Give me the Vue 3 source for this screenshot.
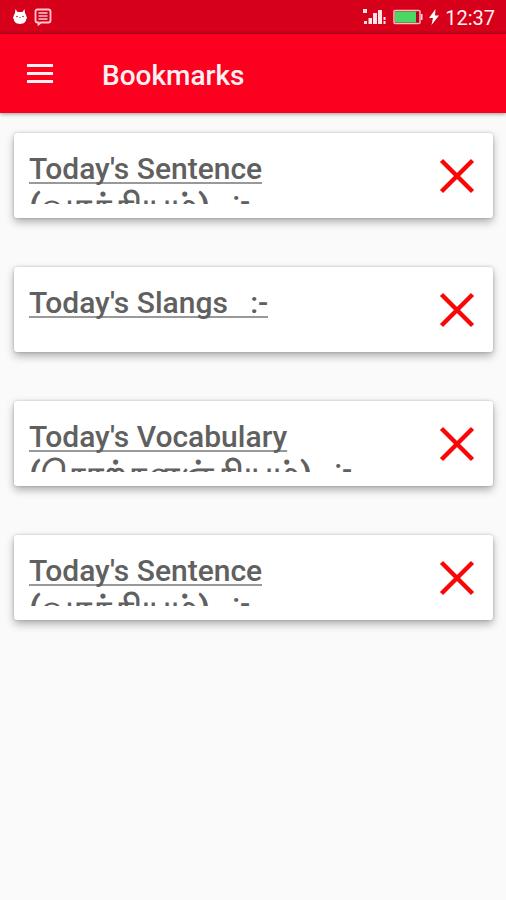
<template>
  <div class="screen">
    <div class="status-bar">
      <div class="status-group">
        <svg width="16" height="18" viewBox="0 0 16 18" aria-hidden="true">
          <path d="M3.500 1l2 3h5l2-3 .6 4.500c1 1 1.200 2 1.200 3 1 .3 1 2 0 2.300C14 14 12 16 8 16s-6-2-6.300-5.200c-1-.3-1-2 0-2.300 0-1 .3-2 1.200-3z" fill="#fff" />
          <circle cx="5" cy="8.500" r=".8" fill="#d0021b" />
          <circle cx="11" cy="8.500" r=".8" fill="#d0021b" />
          <path d="M7 9.500h2" stroke="#e88" />
        </svg>
        <svg width="18" height="18" viewBox="0 0 18 18" fill="none" stroke="#ffc9cf" aria-hidden="true">
          <path d="M3.500 1.500h11q2 0 2 2v9q0 2-2 2H7l-2.500 2v-2h-1q-2 0-2-2v-9q0-2 2-2z" stroke-width="1.800" />
          <path d="M4.500 5h9M4.500 8h9M4.500 11h9" stroke-width="1.500" />
        </svg>
      </div>
      <div class="status-group">
        <svg width="25" height="18" viewBox="0 0 25 18" fill="#ffe3e6" aria-hidden="true">
          <path d="M1 1h4v4H1zM2 13h3v3H2zM6.500 10H10v6H6.500zM11 5h4v11h-4zM16 2h4v14h-4zM21.500 9h2v3h-2zM21.500 13h2v3h-2z" />
        </svg>
        <svg width="30" height="16" viewBox="0 0 30 16" aria-hidden="true">
          <rect x="1" y="1.500" width="26" height="13" rx="1" fill="#b3001b" stroke="#ffb9c0" stroke-width="1.500" />
          <rect x="2" y="2.500" width="21" height="11" fill="#4bd763" />
          <path d="M28 5h1.500v6H28z" fill="#ffd5d9" />
        </svg>
        <svg width="10" height="16" viewBox="0 0 10 16" fill="#fff" aria-hidden="true">
          <path d="M6.500 0L0 9h4l-1.500 7L10 6.500H6z" />
        </svg>
        <span class="clock">12:37</span>
      </div>
    </div>

    <header class="toolbar">
      <button class="menu-button" type="button" aria-label="Open menu">
        <svg width="28" height="20" viewBox="0 0 28 20" aria-hidden="true">
          <path d="M1 1.500h26M1 9.500h26M1 17.500h26" stroke="#fff0f1" stroke-width="3" />
        </svg>
      </button>
      <h1 class="toolbar-title">Bookmarks</h1>
    </header>

    <ul class="bookmark-list">
      <li v-for="bookmark in bookmarks" :key="bookmark.id" class="bookmark-card">
        <div class="bookmark-text">
          <span class="bookmark-title">{{ bookmark.title }}</span>
          <span v-if="bookmark.translation" class="bookmark-translation">
            <span class="tamil">{{ bookmark.translation }}</span>
            <span class="suffix">&nbsp;&nbsp;&nbsp;:-</span>
          </span>
        </div>
        <button
          class="remove-button"
          type="button"
          aria-label="Remove bookmark"
          @click="removeBookmark(bookmark.id)"
        >
          <svg width="36" height="36" viewBox="0 0 36 36" aria-hidden="true">
            <path d="M2.500 2.500l31 31M33.500 2.500l-31 31" stroke="#f90606" stroke-width="4.500" />
          </svg>
        </button>
      </li>
    </ul>
  </div>
</template>

<script setup>
import { ref } from 'vue'

const bookmarks = ref([
  { id: 1, title: "Today's Sentence", translation: '(வாக்கியம்)' },
  { id: 2, title: "Today's Slangs\u00a0\u00a0 :-" },
  { id: 3, title: "Today's Vocabulary", translation: '(சொற்களஞ்சியம்)' },
  { id: 4, title: "Today's Sentence", translation: '(வாக்கியம்)' }
])

const removeBookmark = (id) => {
  bookmarks.value = bookmarks.value.filter((bookmark) => bookmark.id !== id)
}
</script>

<style>
body {
  margin: 0;
  background: #fafafa;
}
</style>

<style scoped>
.screen {
  min-height: 100vh;
  background: #fafafa;
  font-family: Roboto, "Noto Sans", sans-serif;
}

/* Status bar */
.status-bar {
  display: flex;
  align-items: center;
  justify-content: space-between;
  height: 34px;
  padding: 0 11px 0 12px;
  background: linear-gradient(#d6001b 90%, #c00019);
  box-sizing: border-box;
}

.status-group {
  display: flex;
  align-items: center;
  gap: 6px;
}

.clock {
  padding-top: 2px;
  color: #fff0f1;
  font-size: 20px;
  line-height: 24px;
}

/* Toolbar */
.toolbar {
  position: relative;
  display: flex;
  align-items: center;
  gap: 48px;
  height: 79px;
  padding: 0 26px;
  background: #fc0020;
  box-shadow: 0 1px 4px rgba(0, 0, 0, 0.4);
  box-sizing: border-box;
}

.menu-button,
.remove-button {
  display: flex;
  flex: none;
  padding: 0;
  border: 0;
  background: none;
  cursor: pointer;
}

.toolbar-title {
  margin: 0;
  padding-top: 4px;
  color: #fff0f1;
  font-size: 28px;
  font-weight: 500;
  line-height: 32px;
}

/* Bookmarks */
.bookmark-list {
  display: flex;
  flex-direction: column;
  gap: 49px;
  margin: 0;
  padding: 20px 13px 48px 14px;
  list-style: none;
}

.bookmark-card {
  display: flex;
  align-items: center;
  justify-content: space-between;
  height: 85px;
  padding: 14px 18px 14px 15px;
  border-radius: 3px;
  background: #fff;
  box-shadow: 0 4px 8px rgba(0, 0, 0, 0.3), 0 0 3px rgba(0, 0, 0, 0.2);
  box-sizing: border-box;
}

.bookmark-text {
  display: flex;
  flex-direction: column;
  align-items: flex-start;
  height: 57px;
  overflow: hidden;
  color: #606060;
  font-size: 30px;
  font-weight: 500;
}

.bookmark-title {
  flex: none;
  line-height: 44px;
  text-decoration: underline 2px #999;
  text-decoration-skip-ink: none;
  text-underline-offset: 3px;
}

.bookmark-translation {
  display: flex;
  flex: none;
  align-items: flex-start;
}

.tamil {
  font-size: 34px;
  font-weight: 700;
  line-height: 28px;
  text-decoration: underline;
}

.suffix {
  line-height: 22px;
  text-decoration: underline;
}
</style>
